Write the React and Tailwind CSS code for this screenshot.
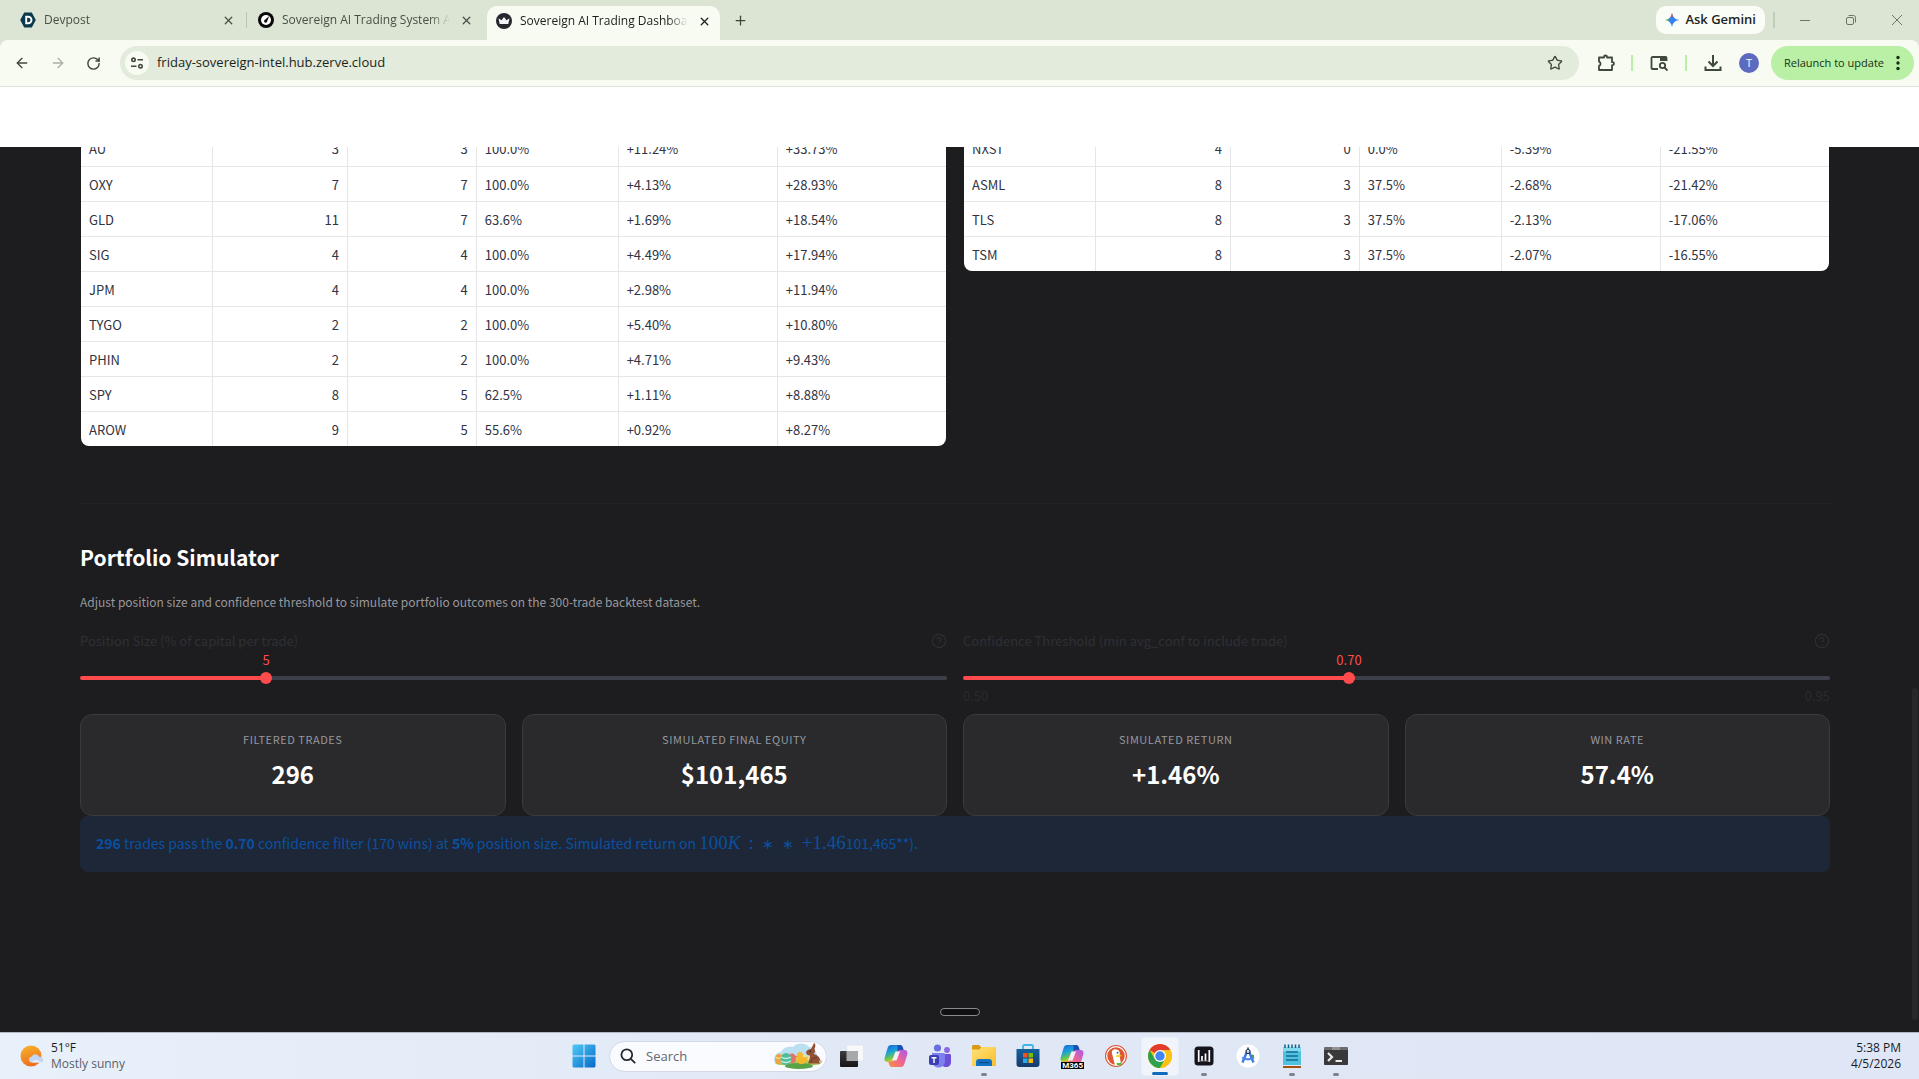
import { useState } from "react";
import { ArrowLeft, ArrowRight, RotateCw, X, Plus, Star, CircleHelp } from "lucide-react";

const gainers = [
  ["AU", "3", "3", "100.0%", "+11.24%", "+33.73%"],
  ["OXY", "7", "7", "100.0%", "+4.13%", "+28.93%"],
  ["GLD", "11", "7", "63.6%", "+1.69%", "+18.54%"],
  ["SIG", "4", "4", "100.0%", "+4.49%", "+17.94%"],
  ["JPM", "4", "4", "100.0%", "+2.98%", "+11.94%"],
  ["TYGO", "2", "2", "100.0%", "+5.40%", "+10.80%"],
  ["PHIN", "2", "2", "100.0%", "+4.71%", "+9.43%"],
  ["SPY", "8", "5", "62.5%", "+1.11%", "+8.88%"],
  ["AROW", "9", "5", "55.6%", "+0.92%", "+8.27%"],
];

const losers = [
  ["NXST", "4", "0", "0.0%", "-5.39%", "-21.55%"],
  ["ASML", "8", "3", "37.5%", "-2.68%", "-21.42%"],
  ["TLS", "8", "3", "37.5%", "-2.13%", "-17.06%"],
  ["TSM", "8", "3", "37.5%", "-2.07%", "-16.55%"],
];

const metrics = [
  ["FILTERED TRADES", "296"],
  ["SIMULATED FINAL EQUITY", "$101,465"],
  ["SIMULATED RETURN", "+1.46%"],
  ["WIN RATE", "57.4%"],
];

/* ---------- Browser chrome ---------- */

function DevpostIcon() {
  return (
    <svg viewBox="0 0 16 16" className="size-4 shrink-0">
      <path d="M4.2 .6h7.6L15.8 8l-4 7.4H4.2L.2 8z" fill="#0b3a4e" />
      <path d="M6.2 4.7h2a3.3 3.3 0 0 1 0 6.600h-2z" fill="none" stroke="#fff" strokeWidth="1.9" />
    </svg>
  );
}

function GaugeIcon() {
  return (
    <svg viewBox="0 0 16 16" className="size-4 shrink-0">
      <circle cx="8" cy="8" r="8" fill="#0a0a0a" />
      <circle cx="8" cy="8" r="5" fill="#fff" />
      <path d="M11.200 3.900 9.300 8.800a1.600 1.600 0 1 1-2-1.300z" fill="#0a0a0a" />
    </svg>
  );
}

function CrownIcon() {
  return (
    <svg viewBox="0 0 16 16" className="size-4 shrink-0">
      <circle cx="8" cy="8" r="8" fill="#26272d" />
      <path d="M2.500 5.200 5.500 7.300 8 4l2.500 3.300 3-2.100-1.200 5.800H3.700z" fill="#f4f4f6" />
    </svg>
  );
}

function Tab({ icon, title, active, width }) {
  return (
    <div
      className={
        "flex items-center pl-[9px] " +
        width +
        (active
          ? " mt-[6px] h-[34px] rounded-t-[10px] bg-[#f7fbf2] pb-1 text-[#1b1f1a]"
          : " h-10 text-[#475046]")
      }
    >
      {icon}
      <span className="ml-2 min-w-0 flex-1 overflow-hidden whitespace-nowrap text-[12px] leading-4 [mask-image:linear-gradient(to_right,black_88%,transparent)]">
        {title}
      </span>
      <button aria-label={"Close " + title} className="ml-2 flex size-4 items-center justify-center">
        <X size={13} strokeWidth={2.4} />
      </button>
    </div>
  );
}

function TabStrip() {
  return (
    <div className="flex h-10 items-start bg-[#dce5d4] pl-[11px]">
      <Tab icon={<DevpostIcon />} title="Devpost" width="w-[233px] pr-2" />
      <div className="mx-[2px] mt-3 h-4 w-px bg-[#b9c4b1]" />
      <Tab icon={<GaugeIcon />} title="Sovereign AI Trading System Architecture" width="w-[238px] pr-[13px]" />
      <Tab icon={<CrownIcon />} title="Sovereign AI Trading Dashboard" active width="w-[233px] pr-2" />
      <button aria-label="New tab" className="ml-3 mt-3 flex size-4 items-center justify-center text-[#3c453a]">
        <Plus size={15} strokeWidth={2} />
      </button>
      <div className="ml-auto flex h-10 items-center pr-[14px]">
        <button className="flex h-7 items-center gap-[6px] rounded-[10px] bg-[#fafdf6] px-[9px] text-[13px] font-semibold text-[#1f241e]">
          <svg viewBox="0 0 14 14" className="size-[14px]">
            <defs>
              <linearGradient id="gem" x1="0" y1="0" x2="1" y2="0.3">
                <stop offset="0" stopColor="#f4b51e" />
                <stop offset="0.3" stopColor="#48a868" />
                <stop offset="0.5" stopColor="#3c7df0" />
                <stop offset="1" stopColor="#3186ff" />
              </linearGradient>
            </defs>
            <path d="M7 0c.6 4 3 6.400 7 7-4 .6-6.400 3-7 7-.6-4-3-6.400-7-7 4-.6 6.400-3 7-7z" fill="url(#gem)" />
            <path d="M7 0c.2 1.500.6 2.700 1.300 3.700H5.700C6.400 2.700 6.800 1.500 7 0z" fill="#e9483f" />
          </svg>
          Ask Gemini
        </button>
        <div className="ml-2 h-4 w-[2px] bg-[#c3cdbb]" />
        <button aria-label="Minimize" className="ml-[22px] flex size-4 items-center justify-center">
          <span className="h-px w-[10px] bg-[#6c7569]" />
        </button>
        <button aria-label="Restore" className="ml-[30px] size-4">
          <svg viewBox="0 0 16 16" fill="none" stroke="#6c7569" className="size-4">
            <rect x="3.500" y="5.500" width="7" height="7" rx="1.500" />
            <path d="M5.500 3.500h5a2 2 0 0 1 2 2v5" />
          </svg>
        </button>
        <button aria-label="Close" className="ml-[30px] size-4">
          <svg viewBox="0 0 16 16" fill="none" stroke="#6c7569" className="size-4">
            <path d="M3 3l10 10M13 3 3 13" />
          </svg>
        </button>
      </div>
    </div>
  );
}

function Toolbar() {
  return (
    <div className="bg-[#dce5d4]">
      <div className="flex h-[46px] items-center rounded-t-[8px] bg-[#f7fbf2] pl-[14px] pr-[5px] text-[#3f483d]">
        <button aria-label="Back"><ArrowLeft size={16} strokeWidth={2} /></button>
        <button aria-label="Forward" className="ml-5 text-[#a9b1a5]"><ArrowRight size={16} strokeWidth={2} /></button>
        <button aria-label="Reload" className="ml-5"><RotateCw size={15} strokeWidth={2.300} /></button>
        <div className="ml-[19px] flex h-[34px] flex-1 items-center rounded-full bg-[#e3ebdc] pl-[5px] pr-4">
          <button aria-label="View site information" className="flex size-6 shrink-0 items-center justify-center rounded-full bg-[#f7fbf2]">
            <svg viewBox="0 0 14 14" fill="none" stroke="currentColor" strokeWidth="1.600" className="size-[14px]">
              <circle cx="3.500" cy="3.800" r="1.700" />
              <path d="M7.500 3.800h5.500M1 10.200h5.500" />
              <circle cx="10.500" cy="10.200" r="1.700" />
            </svg>
          </button>
          <input
            aria-label="Address and search bar"
            defaultValue="friday-sovereign-intel.hub.zerve.cloud"
            className="ml-2 min-w-0 flex-1 bg-transparent text-[13px] text-[#1b1f1a] outline-none"
          />
          <button aria-label="Bookmark this tab"><Star size={16} strokeWidth={2} /></button>
        </div>
        <button aria-label="Extensions" className="ml-[18px]">
          <svg viewBox="0 0 18 18" fill="none" stroke="currentColor" strokeWidth="1.800" strokeLinejoin="round" className="size-[18px]">
            <path d="M2 3.500h5V3a1.500 1.500 0 0 1 3 0v.5h5v4.700h.5a1.500 1.500 0 0 1 0 3H15V16H2v-4.200a2.200 2.200 0 0 0 0-4.200z" />
          </svg>
        </button>
        <div className="ml-4 h-4 w-[2px] bg-[#baf0a5]" />
        <button aria-label="Side search" className="ml-[17px]">
          <svg viewBox="0 0 18 18" fill="none" stroke="currentColor" strokeWidth="1.800" className="size-[18px]">
            <path d="M8 15H2.500A1 1 0 0 1 1.500 14V4a1 1 0 0 1 1-1h13a1 1 0 0 1 1 1v3" />
            <path d="M10 2.500h6.500V7H10z" fill="currentColor" stroke="none" />
            <circle cx="12.500" cy="11.500" r="2.700" />
            <path d="m14.500 13.500 3 3" />
          </svg>
        </button>
        <div className="ml-[17px] h-4 w-[2px] bg-[#baf0a5]" />
        <button aria-label="Downloads" className="ml-[17px]">
          <svg viewBox="0 0 18 18" fill="none" stroke="currentColor" strokeWidth="2" className="size-[18px]">
            <path d="M9 1v10.500M4.500 7.500 9 12l4.500-4.500M1.500 12.500V16h15v-3.500" />
          </svg>
        </button>
        <button aria-label="Profile" className="ml-[17px] flex size-5 items-center justify-center rounded-full bg-[#5c6bc0] text-[11px] text-white">
          T
        </button>
        <button className="ml-3 flex h-[34px] items-center rounded-full bg-[#baf0a5] pl-[13px] pr-[14px] text-[11px] text-[#143011]">
          Relaunch to update
          <svg viewBox="0 0 4 16" className="ml-3 h-4 w-1 fill-[#143011]">
            <circle cx="2" cy="2.500" r="1.700" />
            <circle cx="2" cy="8" r="1.700" />
            <circle cx="2" cy="13.500" r="1.700" />
          </svg>
        </button>
      </div>
      <div className="h-px bg-[#dde3d8]" />
    </div>
  );
}

/* ---------- Dashboard ---------- */

function TradeTable({ label, rows }) {
  return (
    <div className="-mt-4 self-start overflow-hidden rounded-b-[8px] bg-white mx-px">
      <table aria-label={label} className="w-full table-fixed border-collapse text-[13px] leading-4 text-[#31333f]">
        <colgroup>
          <col className="w-[15.2%]" />
          <col className="w-[15.6%]" />
          <col className="w-[14.9%]" />
          <col className="w-[16.4%]" />
          <col className="w-[18.4%]" />
          <col />
        </colgroup>
        <tbody>
          {rows.map((row) => (
            <tr key={row[0]} className="h-[35px] border-b border-[#e6e6e8] last:border-b-0">
              {row.map((cell, i) => (
                <td
                  key={i}
                  className={
                    "border-r border-[#e6e6e8] px-2 pb-0 pt-0.5 last:border-r-0 " +
                    (i === 1 || i === 2 ? "text-right" : "text-left")
                  }
                >
                  {cell}
                </td>
              ))}
            </tr>
          ))}
        </tbody>
      </table>
    </div>
  );
}

function Slider({ id, label, min, max, step, initial, digits, showRange }) {
  const [value, setValue] = useState(initial);
  const fraction = (value - min) / (max - min);
  const position = `calc(6px + (100% - 12px) * ${fraction})`;
  return (
    <div>
      <div className="flex h-5 items-center justify-between text-[#2f2f36]">
        <label htmlFor={id} className="text-[13px] leading-5">{label}</label>
        <button aria-label={"Help: " + label}><CircleHelp size={16} strokeWidth={1.700} /></button>
      </div>
      <div className="relative mt-px h-4">
        <output
          htmlFor={id}
          className="absolute -translate-x-1/2 text-[13px] leading-4 text-[#ff4b4b]"
          style={{ left: position }}
        >
          {value.toFixed(digits)}
        </output>
      </div>
      <div className="mt-1 flex h-3 items-center">
        <input
          id={id}
          type="range"
          min={min}
          max={max}
          step={step}
          value={value}
          onChange={(e) => setValue(Number(e.target.value))}
          className="h-1 w-full appearance-none rounded-full [&::-webkit-slider-thumb]:size-3 [&::-webkit-slider-thumb]:appearance-none [&::-webkit-slider-thumb]:rounded-full [&::-webkit-slider-thumb]:bg-[#ff4b4b]"
          style={{ background: `linear-gradient(to right, #ff4b4b ${position}, #3d4048 ${position})` }}
        />
      </div>
      <div className="mt-1 flex h-4 justify-between text-[13px] leading-4 text-[#2a2a2f]">
        {showRange && (
          <>
            <span>{min.toFixed(digits)}</span>
            <span>{max.toFixed(digits)}</span>
          </>
        )}
      </div>
    </div>
  );
}

function Dashboard() {
  return (
    <main className="relative flex min-h-0 flex-1 flex-col overflow-hidden bg-[#1d1d1f] pl-20 pr-[89px] font-['Noto_Sans_CJK_JP','Noto_Sans_CJK_SC',sans-serif]">
      <div className="grid grid-cols-2 gap-4">
        <TradeTable label="Best tickers" rows={gainers} />
        <TradeTable label="Worst tickers" rows={losers} />
      </div>
      <hr className="mt-[57px] border-[#232326]" />
      <h2 className="mt-[37px] text-[21px] font-bold leading-8 text-white">Portfolio Simulator</h2>
      <p className="mt-[19px] text-[12px] leading-5 text-[#98989d]">
        Adjust position size and confidence threshold to simulate portfolio outcomes on the 300-trade backtest dataset.
      </p>
      <div className="mt-[19px] grid grid-cols-2 gap-4">
        <Slider id="size" label="Position Size (% of capital per trade)" min={1} max={20} step={1} initial={5} digits={0} />
        <Slider id="confidence" label="Confidence Threshold (min avg_conf to include trade)" min={0.5} max={0.95} step={0.05} initial={0.7} digits={2} showRange />
      </div>
      <div className="mt-[10px] grid grid-cols-4 gap-4">
        {metrics.map(([label, value]) => (
          <div key={label} className="rounded-[12px] border border-[#3a3a3d] bg-[#2a2a2d] pb-[25px] pt-[15px] text-center">
            <div className="text-[11px] leading-[18px] tracking-wider text-[#98989d]">{label}</div>
            <div className="mt-[10px] text-[24px] font-bold leading-8 text-white">{value}</div>
          </div>
        ))}
      </div>
      <p className="rounded-[8px] bg-[#1e2737] px-4 pb-[17px] pt-[15px] text-[14px] leading-6 text-[#0a50a0]">
        <b>296</b> trades pass the <b>0.70</b> confidence filter (170 wins) at <b>5%</b> position size. Simulated return on{" "}
        <span className="font-['Liberation_Serif',serif] text-[19px] leading-none">
          100<i>K</i><span className="mx-2">:</span>
          <span className="mr-1 text-[14px]">∗</span>
          <span className="mx-1 text-[14px]">∗</span>
          <span className="ml-1">+</span>1.46
        </span>
        101,465**).
      </p>
      <div className="absolute bottom-4 left-1/2 h-2 w-10 -translate-x-1/2 rounded-full border border-[#8b8b8e] bg-[#111113]" />
      <div className="absolute bottom-3 right-[1px] top-[541px] w-[6px] rounded-full bg-[#28282c]" />
    </main>
  );
}

/* ---------- Taskbar ---------- */

function WindowsIcon() {
  return (
    <svg viewBox="0 0 24 24" className="size-6">
      <defs>
        <linearGradient id="win" x1="0" y1="0" x2="1" y2="1">
          <stop offset="0" stopColor="#4fcaf6" />
          <stop offset="1" stopColor="#0669c9" />
        </linearGradient>
      </defs>
      <path d="M1.500.5h10v11H.5v-10zM12.500.5h10l1 1v10h-11zM.5 12.500h11v11h-10l-1-1zM12.500 12.500h11v10l-1 1h-10z" fill="url(#win)" />
    </svg>
  );
}

function EasterArt() {
  return (
    <svg viewBox="0 0 50 26" className="h-[26px] w-[50px]">
      <path d="M2 20C-1 14 4 9 8 9c2-5 8-6 12-5 5-5 13-4 16 0 6 0 9 6 8 14l2 3z" fill="#b9dff0" />
      <path d="M4 12c8-3 14-1 20 1 8-2 14-1 20 1v6H4z" fill="#e5e3a6" />
      <ellipse cx="25" cy="20" rx="23" ry="3" fill="#a9c65a" />
      <ellipse cx="26" cy="23" rx="14" ry="3" fill="#5aa248" />
      <ellipse cx="6" cy="16" rx="4" ry="5" fill="#f0a04c" />
      <path d="M2.500 14q3.500 3 7 0" stroke="#f8dc72" strokeWidth="1.500" fill="none" />
      <ellipse cx="19" cy="15.500" rx="4" ry="5" fill="#df736d" />
      <ellipse cx="13" cy="16" rx="5.500" ry="6" fill="#4fbca1" />
      <path d="M8 14q5 3 10 0M8 18q5 3 10 0" stroke="#c9f0d2" strokeWidth="1.300" fill="none" />
      <path d="M24 12a3 3 0 1 1 5.500 1.500c2 1 4 1 5-.5 1 5-2 8-6 8-5 0-6-4-4.500-9z" fill="#f7b92c" />
      <path d="m23.500 12.500-2 1 2.500 1z" fill="#e77c1f" />
      <path d="M33 9c1-2 3-3 5-3l3-6c2 1 1.500 4 .5 6 1 2 .5 4-1 5 5 1 8 5 6.500 9.500H35c1-3 2-5 2-8-2 0-4-1-4-3.500z" fill="#925035" />
      <path d="M38 20c0-4 3-6 6-5" stroke="#6f3825" fill="none" />
      <circle cx="37.500" cy="8.500" r=".7" fill="#2d1710" />
      <circle cx="47.500" cy="18.500" r="1.600" fill="#d8b59f" />
    </svg>
  );
}

function TaskViewIcon() {
  return (
    <svg viewBox="0 0 24 24" className="size-6">
      <defs>
        <linearGradient id="tv" x1="0" y1="0" x2="0" y2="1">
          <stop offset="0" stopColor="#3c3c3c" />
          <stop offset="1" stopColor="#161616" />
        </linearGradient>
      </defs>
      <rect x="6.500" y="1" width="17" height="16" rx="1" fill="#f7f8fa" stroke="#d9dce2" strokeWidth=".5" />
      <rect x="0" y="7" width="18" height="16" rx="1" fill="url(#tv)" />
      <path d="M6.500 7H17a1 1 0 0 1 1 1v9H6.500z" fill="#a7a8aa" />
    </svg>
  );
}

function CopilotShape() {
  return (
    <>
      <defs>
        <linearGradient id="cp1" x1="0" y1="0" x2="0.4" y2="1">
          <stop offset="0" stopColor="#1b62d8" />
          <stop offset="0.45" stopColor="#1aa2d8" />
          <stop offset="0.75" stopColor="#67c64e" />
          <stop offset="1" stopColor="#f1d21d" />
        </linearGradient>
        <linearGradient id="cp2" x1="1" y1="0" x2="0" y2="1">
          <stop offset="0" stopColor="#a45cf2" />
          <stop offset="0.5" stopColor="#f2648f" />
          <stop offset="1" stopColor="#fb8e3c" />
        </linearGradient>
      </defs>
      <path d="M7 1h9c2 0 2.500 1.500 3 3l.7 2.500h-3c-2 0-3 1-3.700 3L11 15c-.6 2-1.500 3-3.500 3H4c-3 0-4-2-3.300-4.500L3.600 4C4.200 2 5.200 1 7 1z" fill="url(#cp1)" />
      <path d="M13.500 1H16c2 0 2.500 1.500 3 3l.7 2.500h-3c-1.500 0-2.500.7-3.200 2z" fill="#1c50b8" />
      <path d="M17 23H8c-2 0-2.500-1.500-3-3l-.7-2.500h3c2 0 3-1 3.700-3L13 9c.6-2 1.500-3 3.500-3H20c3 0 4 2 3.300 4.500L20.400 20c-.6 2-1.600 3-3.400 3z" fill="url(#cp2)" />
      <path d="M11.500 7.500h4.500l-3.500 9H8z" fill="#f3effa" />
    </>
  );
}

function TeamsIcon() {
  return (
    <svg viewBox="0 0 24 24" className="size-6">
      <circle cx="9.500" cy="4" r="3.600" fill="#6a6fe0" />
      <circle cx="19" cy="6" r="2.900" fill="#8b66e8" />
      <path d="M13 10h8.500c1 0 1.500.6 1.500 1.500V18c0 3-2 5-5 5s-5-2-5-5z" fill="#6d4fd8" />
      <path d="M4 9h11.500c1 0 1.500.6 1.500 1.500V17c0 4-3 6.500-6.500 6.500S4 21 4 17z" fill="#7d80ee" />
      <rect x="1" y="11" width="10" height="10" rx="2" fill="#3a3fb4" />
      <path d="M3.500 13.700h5M6 13.700V19" stroke="#fff" strokeWidth="1.400" />
    </svg>
  );
}

function ExplorerIcon() {
  return (
    <svg viewBox="0 0 24 24" className="size-6">
      <defs>
        <linearGradient id="fe" x1="0" y1="0" x2="1" y2="1">
          <stop offset="0" stopColor="#ffe17c" />
          <stop offset="1" stopColor="#f9be28" />
        </linearGradient>
      </defs>
      <path d="M0 2.500C0 1.500.6 1 1.500 1H7l2.500 2.500V7H0z" fill="#d89a14" />
      <path d="M0 5.500h7.500L9.500 3H23c.7 0 1 .4 1 1v18H0z" fill="url(#fe)" />
      <path d="M4 22v-4c0-2 1-3 3-3h10c2 0 3 1 3 3v4z" fill="#1273c4" />
      <path d="M7.500 18.500h9" stroke="#0a4f92" strokeWidth="1.500" strokeLinecap="round" />
    </svg>
  );
}

function StoreIcon() {
  return (
    <svg viewBox="0 0 24 24" className="size-6">
      <defs>
        <linearGradient id="st" x1="0" y1="0" x2="0" y2="1">
          <stop offset="0" stopColor="#12629f" />
          <stop offset="1" stopColor="#173a6c" />
        </linearGradient>
      </defs>
      <path d="M7 6V2.500C7 1.500 7.600 1 8.500 1h7c.9 0 1.500.5 1.500 1.500V6" fill="none" stroke="#3cb4e8" strokeWidth="1.800" />
      <path d="M.5 5h23v15c0 2-1 3-3 3h-17c-2 0-3-1-3-3z" fill="url(#st)" />
      <path d="M7 9h4.500v4.500H7z" fill="#f25022" />
      <path d="M12.500 9H17v4.500h-4.500z" fill="#7fba00" />
      <path d="M7 14.500h4.500V19H7z" fill="#2aa8ea" />
      <path d="M12.500 14.500H17V19h-4.500z" fill="#ffb900" />
    </svg>
  );
}

function M365Icon() {
  return (
    <div className="relative size-6">
      <svg viewBox="0 0 24 24" className="size-6"><CopilotShape /></svg>
      <span className="absolute -bottom-px right-0 bg-black px-px font-['Roboto',sans-serif] text-[8px] font-bold leading-[7px] text-white">
        M365
      </span>
    </div>
  );
}

function DuckIcon() {
  return (
    <svg viewBox="0 0 24 24" className="size-6">
      <circle cx="12" cy="12" r="11" fill="#de5833" />
      <circle cx="12" cy="12" r="9.300" fill="none" stroke="#fff" strokeWidth="1.200" />
      <path d="M8 7c1.500-2.500 6-2.500 7.300.5.700 1.700.5 3.500.5 5 0 3 1.500 5.500 1.200 7.800-2 1.200-4 1.300-6 .8C10 17 9 14 8.500 11.500 8.200 10 7.400 8.500 8 7z" fill="#fff" />
      <path d="M12 11.500c2-.8 4-.8 6 0-1 1.200-3.500 1.600-6 1.300z" fill="#fdd20a" />
      <path d="M12.500 18.500c2 1 4 .5 5-.7v3l-4.500.5z" fill="#4cba3c" />
      <circle cx="13.500" cy="8.700" r=".9" fill="#2d4f8e" />
    </svg>
  );
}

function ChromeIcon() {
  return (
    <svg viewBox="0 0 24 24" className="size-6">
      <circle cx="12" cy="12" r="12" fill="#fbc116" />
      <path d="M12 12 1.610 6A12 12 0 0 1 22.390 6z" fill="#e33b2e" />
      <path d="M1.610 6A12 12 0 0 0 12 24l5.200-9L12 12 6.800 15z" fill="#2ba24c" />
      <path d="M12 6h10.390A12 12 0 0 1 12 24l5.200-9z" fill="#fbc116" />
      <circle cx="12" cy="12" r="6" fill="#fff" />
      <circle cx="12" cy="12" r="4.700" fill="#4285f4" />
    </svg>
  );
}

function WaveIcon() {
  return (
    <svg viewBox="0 0 24 24" className="size-6">
      <rect x="2.500" y="2.500" width="19" height="19" rx="3.500" fill="#15141c" />
      <path d="M6.700 6v12M10 12v5M13.500 9.500V17M17.300 6v12" stroke="#fff" strokeWidth="1.700" />
      <path d="M6.500 17h11" stroke="#8f8f98" strokeWidth=".8" />
    </svg>
  );
}

function StudioIcon() {
  return (
    <svg viewBox="0 0 24 24" className="size-6">
      <circle cx="12" cy="12" r="11.500" fill="#fff" />
      <path d="M11.300 7 6.500 18.500M12.700 7l4.800 11.500" stroke="#3f78e8" strokeWidth="2.400" />
      <path d="M6 13.500c4 2.500 8 2.500 12 0" stroke="#4a84ee" strokeWidth="2" fill="none" />
      <circle cx="12" cy="7.500" r="2" fill="#dbe6fb" stroke="#28344e" strokeWidth="1.200" />
      <path d="M12 3.500v2" stroke="#28344e" strokeWidth="1.500" />
      <circle cx="16.500" cy="12" r="1.600" fill="#3b9a56" />
    </svg>
  );
}

function NotepadIcon() {
  return (
    <svg viewBox="0 0 24 24" className="size-6">
      <path d="M3 22h18v2H3z" fill="#a4510e" />
      <path d="M3 3.500h18V21H3z" fill="#4fc3de" />
      <path d="M3 3.500h18v4H3z" fill="#80d9ec" />
      <path d="M5 .5v3.500M8.500.5v3.500M12 .5v3.500M15.500.5v3.500M19 .5v3.500" stroke="#155f86" strokeWidth="1.500" />
      <path d="M6 8h12M6 12h12M6 16h12" stroke="#146a96" strokeWidth="1.600" />
    </svg>
  );
}

function TerminalIcon() {
  return (
    <svg viewBox="0 0 24 24" className="size-6">
      <path d="M1 3h22a1 1 0 0 1 1 1v3H0V4a1 1 0 0 1 1-1z" fill="#6c6c6c" />
      <path d="M8 3h8v3H8z" fill="#929292" />
      <path d="M0 6h24v14a1 1 0 0 1-1 1H1a1 1 0 0 1-1-1z" fill="#393939" />
      <path d="m4 9 4 4-4 4" stroke="#e8e8e8" strokeWidth="2.200" fill="none" />
      <path d="M11.500 17h6.500" stroke="#fff" strokeWidth="1.800" />
    </svg>
  );
}

const apps = [
  { name: "Task View", icon: <TaskViewIcon /> },
  { name: "Copilot", icon: <svg viewBox="0 0 24 24" className="size-6"><CopilotShape /></svg> },
  { name: "Teams", icon: <TeamsIcon /> },
  { name: "File Explorer", icon: <ExplorerIcon />, open: true },
  { name: "Microsoft Store", icon: <StoreIcon /> },
  { name: "Microsoft 365 Copilot", icon: <M365Icon /> },
  { name: "DuckDuckGo", icon: <DuckIcon /> },
  { name: "Chrome", icon: <ChromeIcon />, active: true },
  { name: "Audio", icon: <WaveIcon />, open: true },
  { name: "Android Studio", icon: <StudioIcon /> },
  { name: "Notepad", icon: <NotepadIcon />, open: true },
  { name: "Terminal", icon: <TerminalIcon />, open: true },
];

function Taskbar() {
  return (
    <footer className="grid h-[47px] shrink-0 grid-cols-[1fr_auto_1fr] items-center border-t border-[#b4b8c2] bg-linear-to-r from-[#e8f0fa] via-[#e0e8f6] to-[#dfe6f5] text-[12px] leading-4">
      <div className="flex items-center gap-[7px] pl-5">
        <svg viewBox="0 0 24 24" className="size-6">
          <defs>
            <linearGradient id="sun" x1="0" y1="0" x2="0.3" y2="1">
              <stop offset="0" stopColor="#f6b62c" />
              <stop offset="1" stopColor="#f0701c" />
            </linearGradient>
          </defs>
          <circle cx="11" cy="12" r="10.500" fill="url(#sun)" />
          <path d="M11 18.500a3 3 0 0 1 .5-5.800 4.200 4.200 0 0 1 7.800.3 2.800 2.800 0 0 1 1.700 5.500z" fill="#c3d5f4" />
          <path d="M12 18.500c2-3 5-3 7-1l3 .5-1 .5z" fill="#e6eefc" />
        </svg>
        <div>
          <div className="text-[#1b1b1f]">51°F</div>
          <div className="text-[#5b5f68]">Mostly sunny</div>
        </div>
      </div>
      <div className="flex items-center pl-[11px]">
        <button aria-label="Start"><WindowsIcon /></button>
        <div className="ml-[13px] flex h-[31px] w-[218px] items-center rounded-full border border-[#d3dae6] bg-[#f9fbfe] pl-[10px] pr-[3px]">
          <svg viewBox="0 0 16 16" fill="none" stroke="#26282c" strokeWidth="1.800" className="size-4 shrink-0">
            <circle cx="6.800" cy="6.800" r="5.400" />
            <path d="m10.800 10.800 4.400 4.400" />
          </svg>
          <input aria-label="Search" placeholder="Search" className="ml-[10px] min-w-0 flex-1 bg-transparent text-[13px] outline-none placeholder:text-[#63676f]" />
          <EasterArt />
        </div>
        <div className="ml-[3px] flex">
          {apps.map((app) => (
            <button
              key={app.name}
              aria-label={app.name}
              className={
                "relative flex h-[39px] items-center justify-center " +
                (app.active
                  ? "mx-[3px] w-[38px] rounded-[4px] border border-[#e9eef6] bg-[#f1f5fb]"
                  : "w-11")
              }
            >
              {app.icon}
              {app.open && <span className="absolute bottom-0 h-[3px] w-[6px] rounded-full bg-[#7d828c]" />}
              {app.active && <span className="absolute bottom-0 h-[3px] w-4 rounded-full bg-[#0f6cbd]" />}
            </button>
          ))}
        </div>
      </div>
      <div className="pr-[18px] text-right text-[#1b1b1f]">
        <div>5:38 PM</div>
        <div>4/5/2026</div>
      </div>
    </footer>
  );
}

export default function App() {
  return (
    <div className="flex h-screen flex-col overflow-hidden bg-white font-['Open_Sans','Noto_Sans',sans-serif]">
      <header>
        <TabStrip />
        <Toolbar />
      </header>
      <div className="h-[60px] shrink-0 bg-white" />
      <Dashboard />
      <Taskbar />
    </div>
  );
}
